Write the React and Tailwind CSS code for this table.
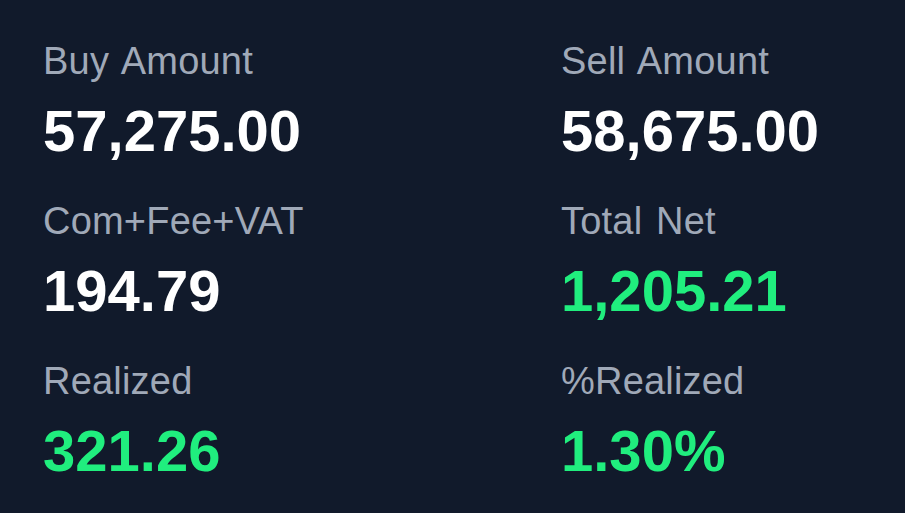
const stats = [
  { label: 'Buy Amount', value: '57,275.00' },
  { label: 'Sell Amount', value: '58,675.00' },
  { label: 'Com+Fee+VAT', value: '194.79' },
  { label: 'Total Net', value: '1,205.21', positive: true },
  { label: 'Realized', value: '321.26', positive: true },
  { label: '%Realized', value: '1.30%', positive: true },
];

export default function App() {
  return (
    <div
      className="h-[513px] w-[905px] overflow-hidden bg-[#111a2b] pl-[43px] pt-[42px]"
      style={{ fontFamily: '"Liberation Sans", Arial, sans-serif' }}
    >
      <div className="grid grid-cols-[518px_1fr] gap-y-[42px]">
        {stats.map((s) => (
          <div key={s.label} className="flex flex-col">
            <span className="text-[38px] leading-[38px] tracking-[0.2px] [word-spacing:3px] text-[#a0a9b8]">
              {s.label}
            </span>
            <span
              className={`mt-[22px] text-[58px] font-bold leading-[58px] ${s.positive ? 'text-[#20ee7e]' : 'text-white'}`}
            >
              {s.value}
            </span>
          </div>
        ))}
      </div>
    </div>
  );
}
